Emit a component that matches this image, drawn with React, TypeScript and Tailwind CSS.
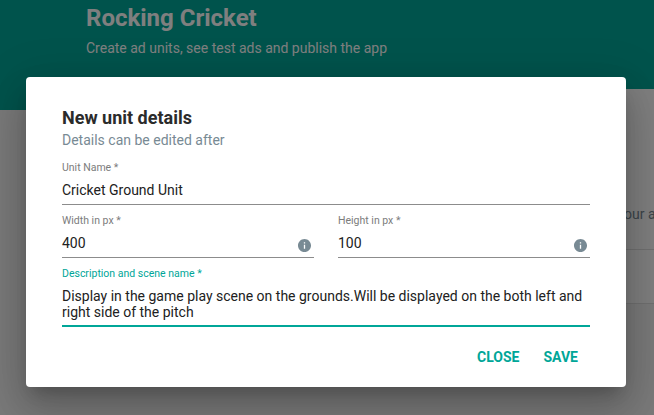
import React from "react";

function InfoIcon() {
  return (
    <svg viewBox="0.5 0.5 23 23" className="block h-[15px] w-[15px] shrink-0 fill-[#788a94]" aria-hidden="true">
      <path d="M12 2C6.48 2 2 6.48 2 12s4.48 10 10 10 10-4.48 10-10S17.52 2 12 2zm1 15h-2v-6h2v6zm0-8h-2V7h2v2z" />
    </svg>
  );
}

function Field({ label, value, info }: { label: string; value: string; info?: boolean }) {
  return (
    <div className="h-[45px] min-w-0 flex-1 border-b border-[#8c8c8c] pt-0.5">
      <div className="h-3 text-[10.5px] leading-3 text-[#7c7c7c]">{label}</div>
      <div className="flex h-8 items-center justify-between pr-[2px]">
        <span className="text-[14px] leading-5 text-[#212121]">{value}</span>
        {info && <span className="pt-[5px]"><InfoIcon /></span>}
      </div>
    </div>
  );
}

function Page() {
  return (
    <div className="h-full bg-[#f5f5f5]">
      <header className="h-[110px] bg-[#00a698] pl-[86px] pt-[3px] text-white">
        <h1 className="text-[24px] leading-[30px] font-bold">Rocking Cricket</h1>
        <p className="mt-[5px] text-[14px] leading-5">
          Create ad units, see test ads and publish the app
        </p>
      </header>
      <main className="relative -mt-[21px] ml-[86px] h-[215px] bg-white">
        <div className="flex h-[161px] items-end justify-end border-b border-[#e0e0e0] pb-[25px]">
          <p className="w-[30px] whitespace-nowrap text-[14px] leading-5 text-[#788a94]">our a</p>
        </div>
        <div className="h-[54px] border-b border-[#e0e0e0]" />
      </main>
    </div>
  );
}

export default function App() {
  return (
    <div className="relative h-[415px] w-[654px] overflow-hidden font-[Roboto,sans-serif]">
      <Page />
      <div className="absolute inset-0 bg-black/50 pl-[26px] pt-[77px]">
        <section
          role="dialog"
          className="flex h-[310px] w-[600px] flex-col rounded-[4px] bg-white px-9 pt-[31px] shadow-[0_11px_15px_-7px_rgba(0,0,0,0.2),0_24px_38px_3px_rgba(0,0,0,0.14),0_9px_46px_8px_rgba(0,0,0,0.12)]"
        >
          <h2 className="text-[18px] leading-5 font-bold text-[#2b2b2b]">New unit details</h2>
          <p className="mt-0.5 text-[14px] leading-5 text-[#788a94]">
            Details can be edited after
          </p>
          <div className="mt-[10px] flex h-[45px]">
            <Field label="Unit Name *" value="Cricket Ground Unit" />
          </div>
          <div className="mt-2 flex h-[45px] gap-6">
            <Field label="Width in px *" value="400" info />
            <Field label="Height in px *" value="100" info />
          </div>
          <div className="mt-2 h-[61px] border-b-2 border-[#00a698] pt-0.5">
            <div className="h-5 text-[10.5px] leading-3 text-[#00a698]">
              Description and scene name *
            </div>
            <p className="whitespace-nowrap text-[14px] leading-4 text-[#212121]">
              Display in the game play scene on the grounds.Will be displayed on the both left and
              <br />
              right side of the pitch
            </p>
          </div>
          <div className="mt-5 flex justify-end gap-6 pr-3 text-[14px] leading-5 font-bold text-[#00a698]">
            <button>CLOSE</button>
            <button>SAVE</button>
          </div>
        </section>
      </div>
    </div>
  );
}
